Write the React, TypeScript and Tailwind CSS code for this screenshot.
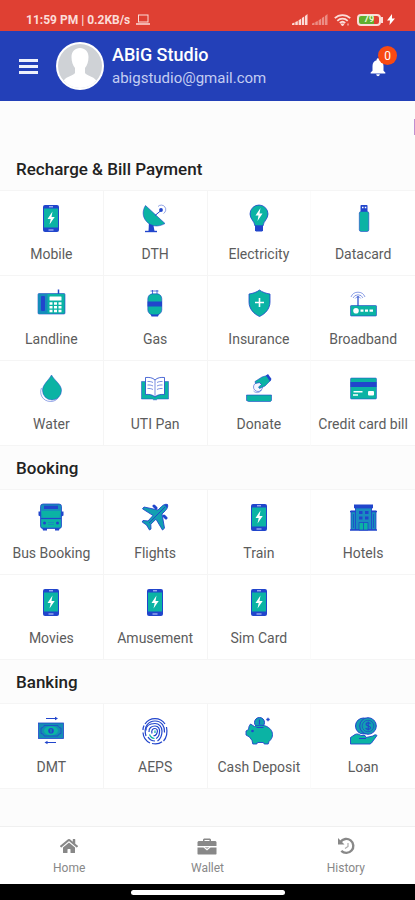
import React from "react";
import { FaHome } from "react-icons/fa";
import { MdNotifications } from "react-icons/md";

const TEAL = "#0bb3a4";
const BLUE = "#2145cc";

type IconProps = {
  children: React.ReactNode;
};
const Icon = ({ children }: IconProps) => (
  <svg viewBox="0 0 30 30" className="size-[30px]" fill="none" aria-hidden="true">
    {children}
  </svg>
);

const PhoneIcon = () => (
  <Icon>
    <rect x="7" y="2" width="16" height="27" rx="2" fill={BLUE} />
    <rect x="8" y="5.5" width="14" height="19" fill={TEAL} />
    <path d="M13 3.8h4M12.5 27h5" stroke="#c9d4ff" strokeWidth="1" />
    <path d="M16.5 8.5l-5 7.500h3.200l-1.200 5.500 5.200-7.500h-3.200z" fill="#fff" />
  </Icon>
);

const DishIcon = () => (
  <Icon>
    <path d="M9 19l-.5 9h6L13 20z" fill={BLUE} />
    <path d="M5 28.5h12" stroke={BLUE} strokeWidth="1.4" />
    <path
      d="M5.5 2.5C2 8 2.500 14 6.500 18.500 11 23.500 18 24.500 25 20.500z"
      fill={TEAL}
      stroke={BLUE}
      strokeWidth=".6"
    />
    <path d="M15 12.500l6-5" stroke={BLUE} strokeWidth="1" />
    <circle cx="21" cy="7" r="1.900" fill={BLUE} />
    <path d="M18 3.500a4.500 4.500 0 1 1 5.500 7" stroke={BLUE} strokeWidth=".7" opacity=".7" />
  </Icon>
);

const BulbIcon = () => (
  <Icon>
    <path
      d="M15 2a9 9 0 0 0-9 9c0 5 4.500 7 5 12h8c.5-5 5-7 5-12a9 9 0 0 0-9-9z"
      fill={TEAL}
      stroke={BLUE}
      strokeWidth=".8"
    />
    <path d="M11 22.500h8v5l-1 1h-6l-1-1z" fill={BLUE} />
    <path d="M16.500 5l-5 7.500h3l-1 5.500 5-7.500h-3z" fill="#fff" />
  </Icon>
);

const UsbIcon = () => (
  <Icon>
    <rect x="12.500" y="2" width="7" height="7" rx=".8" fill={BLUE} />
    <path d="M14 4.500h1.500M16.800 4.500h1.500" stroke="#fff" strokeWidth="1.400" />
    <rect x="11.300" y="8.500" width="9.500" height="20" rx="1.800" fill={TEAL} stroke={BLUE} strokeWidth=".6" />
  </Icon>
);

const LandlineIcon = () => (
  <Icon>
    <path d="M22.500 1.500v6" stroke={BLUE} strokeWidth="1.500" />
    <rect x="2" y="5.500" width="27" height="20.500" rx="1" fill={TEAL} stroke={BLUE} strokeWidth=".6" />
    <rect x="2.500" y="6" width="9" height="19.500" fill="#168bbd" />
    <rect x="5" y="8" width="4" height="15" rx="1" fill={BLUE} />
    <rect x="13.500" y="8.500" width="12" height="4" rx=".5" fill="#fff" />
    <path
      d="M13.500 15.500h3M18 15.500h3M22.500 15.500h3M13.500 19.200h3M18 19.200h3M22.500 19.200h3M13.500 22.900h3M18 22.900h3M22.500 22.900h3"
      stroke="#fff"
      strokeWidth="2.500"
    />
  </Icon>
);

const GasIcon = () => (
  <Icon>
    <path d="M10.500 3h8M12.500 2v4M17 2v4" stroke={BLUE} strokeWidth="1" opacity=".75" />
    <path d="M10.500 26h8.500l-1 2.500h-6.500z" fill={BLUE} />
    <rect x="7.800" y="5.800" width="14" height="21" rx="5" fill={TEAL} stroke={BLUE} strokeWidth=".6" />
    <rect x="7.600" y="13.500" width="14.400" height="5" fill={BLUE} />
  </Icon>
);

const ShieldIcon = () => (
  <Icon>
    <path
      d="M15.500 2c2.500 2 6.500 3.500 10.500 4v8c0 7-5 12-10.500 14.500C10 26 5 21 5 14V6c4-.5 8-2 10.500-4z"
      fill={TEAL}
      stroke={BLUE}
      strokeWidth=".8"
    />
    <path d="M15.500 10v9M11 14.500h9" stroke="#fff" strokeWidth="1.600" />
  </Icon>
);

const RouterIcon = () => (
  <Icon>
    <path d="M10 8v10" stroke={BLUE} strokeWidth="1.200" />
    <path
      d="M3 9a7.500 7.500 0 0 1 14 0M5 10a5.500 5.500 0 0 1 10 0M7.200 10.500a3.200 3.200 0 0 1 5.600 0"
      stroke={BLUE}
      strokeWidth=".8"
      opacity=".65"
    />
    <rect x="2.500" y="17.500" width="26" height="10.500" rx=".8" fill={TEAL} stroke={BLUE} strokeWidth=".6" />
    <circle cx="8" cy="22.700" r="2.800" fill="#fff" />
    <path d="M12.500 22.700h3M17 22.700h3M21.500 22.700h3.500" stroke="#fff" strokeWidth="2.200" />
  </Icon>
);

const DropIcon = () => (
  <Icon>
    <path
      d="M5.500 15c-2.500 6 1 13.300 9 13.500 3.500 0 6-1.500 7.500-3.500"
      stroke={BLUE}
      strokeWidth=".8"
      opacity=".6"
    />
    <path
      d="M15.500 2c3 5.500 10 9.500 10 15.500a9.500 9.500 0 0 1-19 0C6.500 11.500 12.500 7.500 15.500 2z"
      fill={TEAL}
      stroke={BLUE}
      strokeWidth=".5"
    />
  </Icon>
);

const BookIcon = () => (
  <Icon>
    <path d="M1.500 8.500h27V26h-11l-1 .8h-3l-1-.8h-11z" fill={TEAL} stroke={BLUE} strokeWidth=".5" />
    <path
      d="M15 7c-2.500-2.500-6-2.800-9.500-2.500v17c3.500-.3 7 0 9.500 2.500 2.500-2.500 6-2.800 9.500-2.500v-17C21 4.200 17.500 4.500 15 7z"
      fill="#fff"
      stroke={BLUE}
      strokeWidth=".8"
    />
    <path
      d="M15 7v17M7.500 8.500c2-.2 4 .2 5.500 1M7.500 12c2-.2 4 .2 5.500 1M7.500 15.500c2-.2 4 .2 5.500 1M22.500 8.500c-2-.2-4 .2-5.500 1M22.500 12c-2-.2-4 .2-5.500 1M22.500 15.500c-2-.2-4 .2-5.500 1"
      stroke={BLUE}
      strokeWidth=".8"
      opacity=".75"
    />
  </Icon>
);

const DonateIcon = () => (
  <Icon>
    <path d="M2.500 22h25v5.500l-1 1H4.500l-2-1z" fill={TEAL} stroke={BLUE} strokeWidth=".6" />
    <circle cx="14" cy="14" r="4.500" fill="#f3f5ff" stroke={BLUE} strokeWidth=".7" opacity=".8" />
    <path
      d="M11 8.500L18 4l5-1.500 3.500 5L21 13l-5.500 2.500-1-1.500 3-2.500-2-2-4 1z"
      fill={TEAL}
      stroke={BLUE}
      strokeWidth=".6"
    />
    <path d="M22 2.500l2-1.500 3.500 5-1.500 2.500z" fill={BLUE} />
    <path d="M9.500 18c2.500 2.500 6 2 8-1" stroke={BLUE} strokeWidth=".8" opacity=".6" />
  </Icon>
);

const CardIcon = () => (
  <Icon>
    <rect x="2.500" y="5" width="26" height="21" rx="1" fill={TEAL} stroke={BLUE} strokeWidth=".5" />
    <rect x="2.500" y="9" width="26" height="5" fill={BLUE} />
    <path d="M5.500 18.700h9M5 22h5" stroke="#fff" strokeWidth="1.500" />
    <rect x="20" y="18" width="6" height="4.500" rx="1" fill="#fff" />
  </Icon>
);

const BusIcon = () => (
  <Icon>
    <path d="M2.500 9.500h3v5.500l-3-1.500zM27.500 9.500h-3v5.500l3-1.500z" fill={BLUE} />
    <path d="M6 25h5v3.500H7zM19 25h5l-1 3.500h-4z" fill={BLUE} />
    <rect x="4.500" y="2" width="21" height="24.500" rx="2.500" fill="#168fbb" stroke={BLUE} strokeWidth=".8" />
    <rect x="8" y="3.700" width="14" height="3.300" fill={BLUE} />
    <path d="M5.500 9h19l-1 6.500h-17z" fill={TEAL} />
    <path d="M5.500 17.500h19V25h-19z" fill={TEAL} />
    <path d="M5 16.500h20" stroke={BLUE} strokeWidth="1" />
    <circle cx="8.500" cy="21" r="1.500" fill={BLUE} />
    <circle cx="21.500" cy="21" r="1.500" fill={BLUE} />
    <path d="M12 20.500h6M12 22.500h6" stroke="#168fbb" strokeWidth="1" />
  </Icon>
);

const PlaneIcon = () => (
  <Icon>
    <path d="M14 4l2 2M26 16l-2-2" stroke={BLUE} strokeWidth="3" strokeLinecap="round" />
    <path
      d="M27.500 2.500c-2-.8-4.500.5-6 2l-3.500 3.500L4 5 2.500 6.800l10.500 6.700-5 5.500-5-.5-.8 1.500 4.300 3 3 5 1.500-1-.2-4.800 5.200-5L22.500 28l2-1.800L22 12l3.500-3.500c1.500-1.500 2.800-4 2-6z"
      fill="#129fb2"
      stroke={BLUE}
      strokeWidth=".9"
    />
    <path d="M25 5L9 21" stroke={BLUE} strokeWidth="1" />
    <path d="M24 2.800l3.500-.3-.3 3.500z" fill={BLUE} />
  </Icon>
);

const HotelIcon = () => (
  <Icon>
    <path d="M6 2.500h19v3l-1.500 2h-16L6 5.500z" fill={BLUE} />
    <path d="M3 9h5v18.500H3zM23 9h5v18.500h-5z" fill="#168fbb" stroke={BLUE} strokeWidth=".8" />
    <rect x="7.500" y="6" width="16" height="21.500" fill="#1a8cc0" stroke={BLUE} strokeWidth=".8" />
    <path d="M2 9.500h6M23 9.500h6M2 28h27" stroke={BLUE} strokeWidth="1.500" />
    <path d="M11 10.500h3.500M17 10.500h3.500M11 16h3.500M17 16h3.500" stroke={BLUE} strokeWidth="3" />
    <path d="M11 20.500h9V28h-9z" fill={TEAL} stroke={BLUE} strokeWidth=".8" />
    <path d="M15.500 20.500V28M5.500 12v14M25.500 12v14" stroke={BLUE} strokeWidth=".8" />
  </Icon>
);

const TransferIcon = () => (
  <Icon>
    <path d="M10 2.500h10M20 26.500H10" stroke={BLUE} strokeWidth="1" />
    <path d="M19 .8l3 1.700-3 1.700zM11.500 24.800v3.400l-3-1.700z" fill={BLUE} />
    <rect x="2.500" y="7" width="25" height="15.500" fill="#148db4" stroke={BLUE} strokeWidth=".8" />
    <path
      d="M8 9.500h14c0 1.500 1.500 2.500 3 2.500v5.500c-1.500 0-3 1-3 2.500H8c0-1.500-1.500-2.500-3-2.500V12c1.500 0 3-1 3-2.500z"
      stroke={BLUE}
      strokeWidth=".8"
    />
    <ellipse cx="15" cy="14.700" rx="7" ry="4.500" fill={TEAL} />
    <circle cx="15" cy="14.700" r="2.800" fill={BLUE} />
    <path d="M15 13v3.500" stroke={TEAL} strokeWidth="1" />
  </Icon>
);

const FingerprintIcon = () => (
  <Icon>
    <g stroke={BLUE} strokeWidth="1.200">
      <path d="M5 8a12 12 0 0 1 20 0" />
      <path d="M3 14C3 12 3.500 10.500 4 9.500M26.500 11c1 5 .5 10-3 14M3 16.500c.3 5 3 8.500 7 10.500" />
      <path d="M6 20C3 10 9 5 15 5c7 0 10 6 9.500 11.500M12 27.500c4 1 7.500.3 10-1.800" />
      <path d="M6 14.500C6 9.500 10 7.500 15 7.500c4 0 7 3 7 7.500 0 5-1.500 8-4.500 10M8 21c1.500 2.500 4 4 7 4" />
      <path d="M9 16c-.5-4 2.500-6 6-6s5 3 4.500 6.500c-.3 3-1.500 5-3.500 6" />
      <path d="M9.500 18.500c1 2.500 2.500 3.800 5 4" stroke={TEAL} />
      <path d="M12 17.500c-1-3.500 1-5 3-5s3 2 2 4.500-2.500 3-3.500 2.500" />
      <path d="M15 14.500v2.500" stroke={TEAL} />
    </g>
  </Icon>
);

const PiggyIcon = () => (
  <Icon>
    <circle cx="15.500" cy="6.500" r="5" fill="#129fb2" stroke={BLUE} strokeWidth="1" />
    <path d="M15.500 3.500v5" stroke={BLUE} strokeWidth="1.200" />
    <path d="M24 1.800v3.400M22.300 3.500h3.400" stroke={BLUE} strokeWidth="1.300" />
    <path
      d="M5 10.500l1.500-2.500 4 2.500c3-1.500 10-2 14 1 3.500 2.500 4.800 6 3.500 10-.5 1.500-2 3-3 4l-.8 2.500h-4l-.7-1.500h-6l-.7 1.500h-4L8 24.500 5.500 21 2 19v-4l2.500-1.500z"
      fill={TEAL}
      stroke={BLUE}
      strokeWidth=".9"
    />
    <circle cx="8.500" cy="15" r="1.300" fill={BLUE} />
    <path d="M12.500 11.500h7" stroke={BLUE} strokeWidth="1" />
  </Icon>
);

const LoanIcon = () => (
  <Icon>
    <circle cx="15.500" cy="10" r="8" fill="#129fb2" stroke={BLUE} strokeWidth="1" />
    <circle cx="20" cy="10" r="8.300" fill="#129fb2" stroke={BLUE} strokeWidth="1" />
    <circle cx="20" cy="10" r="5.800" stroke={BLUE} strokeWidth=".7" />
    <path
      d="M22.500 7.800c-.8-1.500-4.500-1.500-4.500.5s4.500 1.500 4.500 3.500-4 2-4.800.3M20.200 5.500v9"
      stroke={BLUE}
      strokeWidth="1.100"
    />
    <path
      d="M2.500 21.500L7 18.500c2-1 4-.5 6 1h4l1 2 7-1.500c1.500-1.500 3-1.500 4-.5l-5.500 7.500-1.500 1H2.500z"
      fill={TEAL}
      stroke={BLUE}
      strokeWidth=".9"
    />
    <path d="M11 22.500h7" stroke={BLUE} strokeWidth="1" />
  </Icon>
);

type Service = {
  name: string;
  icon: React.FC;
};
type Section = {
  title: string;
  services: Service[];
};

const sections: Section[] = [
  {
    title: "Recharge & Bill Payment",
    services: [
      { name: "Mobile", icon: PhoneIcon },
      { name: "DTH", icon: DishIcon },
      { name: "Electricity", icon: BulbIcon },
      { name: "Datacard", icon: UsbIcon },
      { name: "Landline", icon: LandlineIcon },
      { name: "Gas", icon: GasIcon },
      { name: "Insurance", icon: ShieldIcon },
      { name: "Broadband", icon: RouterIcon },
      { name: "Water", icon: DropIcon },
      { name: "UTI Pan", icon: BookIcon },
      { name: "Donate", icon: DonateIcon },
      { name: "Credit card bill", icon: CardIcon },
    ],
  },
  {
    title: "Booking",
    services: [
      { name: "Bus Booking", icon: BusIcon },
      { name: "Flights", icon: PlaneIcon },
      { name: "Train", icon: PhoneIcon },
      { name: "Hotels", icon: HotelIcon },
      { name: "Movies", icon: PhoneIcon },
      { name: "Amusement", icon: PhoneIcon },
      { name: "Sim Card", icon: PhoneIcon },
    ],
  },
  {
    title: "Banking",
    services: [
      { name: "DMT", icon: TransferIcon },
      { name: "AEPS", icon: FingerprintIcon },
      { name: "Cash Deposit", icon: PiggyIcon },
      { name: "Loan", icon: LoanIcon },
    ],
  },
];

const SignalIcon = ({ className }: { className?: string }) => (
  <svg viewBox="0 0 16 11" className={`h-[11px] w-4 ${className}`} fill="currentColor" aria-hidden="true">
    <path d="M0 11V9.500L2.500 8.500V11zM3.300 11V8l2.500-1V11zM6.600 11V6.200l2.500-1.500V11zM9.900 11V4l2.300-1.400V11zM13 11V2l2.500-2V11z" />
  </svg>
);

const StatusBar = () => (
  <div className="flex h-[31px] items-center bg-[#df4033] pt-2 pr-5 pl-[26px] text-white">
    <span className="text-xs font-bold text-[#fbdcd8]">11:59 PM | 0.2KB/s</span>
    <svg viewBox="0 0 14 11" className="ml-1.5 h-[11px] w-3.5" fill="none" stroke="#fbdcd8" aria-hidden="true">
      <rect x="2.500" y="1" width="9.500" height="7" />
      <path d="M0 10h14" strokeWidth="1.500" />
    </svg>
    <SignalIcon className="ml-auto text-[#fbdcd8]" />
    <SignalIcon className="ml-1 text-[#ec8d84]" />
    <svg viewBox="0 0 17 12" className="ml-1.5 h-3 w-[17px]" fill="none" stroke="#fbdcd8" strokeWidth="1.800" aria-hidden="true">
      <path d="M.8 4.200a11 11 0 0 1 15.400 0M3.300 6.800a7.500 7.500 0 0 1 10.400 0M5.800 9a4 4 0 0 1 5.400 0" />
      <path d="M8.500 12l-1.500-2h3zM14 9.500v2" fill="#fbdcd8" strokeWidth="1" />
    </svg>
    <div className="ml-1.5 flex h-3 w-6 items-center rounded-sm border-2 border-[#fbdcd8] bg-gradient-to-r from-[#5fae2e] from-75% to-[#df4033] to-75%">
      <span className="w-full text-center text-[9px] leading-none font-bold text-[#e4f7d8]">79</span>
    </div>
    <span className="h-1.5 w-0.5 bg-[#fbdcd8]" />
    <svg viewBox="0 0 8 11" className="ml-1 h-[11px] w-2" fill="#fff" aria-hidden="true">
      <path d="M5 0L0 6.500h3L2.500 11 8 4.500H5z" />
    </svg>
  </div>
);

const Header = () => (
  <header className="flex h-[70px] items-center bg-[#2340b8] pr-[18px] pl-[19px] text-white">
    <button type="button" aria-label="Menu" className="flex w-[19px] flex-col gap-[3px]">
      <span className="h-[3px] w-full bg-[#eef1fc]" />
      <span className="h-[3px] w-full bg-[#eef1fc]" />
      <span className="h-[3px] w-full bg-[#eef1fc]" />
    </button>
    <svg viewBox="0 0 48 48" className="ml-[18px] size-12" aria-hidden="true">
      <circle cx="24" cy="24" r="24" fill="#fff" />
      <circle cx="24" cy="24" r="22" fill="#cfd2d6" />
      <path
        d="M24 6c-5 0-8.500 3.500-8.500 9 0 5 1.500 8.500 3.500 11v5c-2 3-8 3-11.300 7.500A21.500 21.500 0 0 0 24 46a21.500 21.500 0 0 0 16.300-7.500C37 34 31 34 29 31v-5c2-2.500 3.500-6 3.500-11 0-5.500-3.500-9-8.500-9z"
        fill="#fff"
      />
    </svg>
    <div className="ml-2 flex flex-col">
      <h1 className="text-lg leading-6 font-medium">ABiG Studio</h1>
      <p className="text-[15px] leading-[22px] text-[#c3cdf2]">abigstudio@gmail.com</p>
    </div>
    <button type="button" aria-label="Notifications" className="relative ml-auto flex h-10 w-[30px] items-end pb-2">
      <MdNotifications className="size-[22px]" />
      <span className="absolute top-0 right-0 flex size-[19px] items-center justify-center rounded-full bg-[#f84a12] text-xs">
        0
      </span>
    </button>
  </header>
);

const ServiceTile = ({ name, icon: ServiceIcon }: Service) => (
  <button
    type="button"
    className="flex flex-col items-center border-r border-b border-[#f5f5f5] bg-white py-3 nth-[4n]:border-r-0 nth-[4n+3]:border-r-[#fbfbfb]"
  >
    <ServiceIcon />
    <span className="mt-3 text-sm leading-[18px] whitespace-nowrap text-[#5c5c5c]">{name}</span>
  </button>
);

const ServiceSection = ({ title, services }: Section) => (
  <section>
    <h2 className="flex h-11 items-center border-b border-[#f5f5f5] px-4 pt-0.5 text-[17px] font-medium text-[#222]">
      {title}
    </h2>
    <div className="grid grid-cols-4 bg-white">
      {services.map((service) => (
        <ServiceTile key={service.name} {...service} />
      ))}
      {services.length % 4 !== 0 && <div className="border-b border-[#f5f5f5]" />}
    </div>
  </section>
);

const WalletIcon = () => (
  <svg viewBox="0 0 20 17" className="h-[17px] w-5" fill="currentColor" aria-hidden="true">
    <path d="M6 3V1.500L7 .5h6l1 1V3h4.500l1 1v4H.5V4l1-1zM7.500 3h5V2h-5z" fillRule="evenodd" />
    <path d="M.5 9.500h6l3.500 3 3.500-3h6V16l-.5.5H1L.5 16z" />
    <path d="M7.500 9h5L10 11.200z" opacity=".6" />
  </svg>
);

const HistoryIcon = () => (
  <svg viewBox="0 0 18 18" className="size-[18px]" fill="none" stroke="currentColor" aria-hidden="true">
    <path d="M3.500 5a7 7 0 1 1 .8 8.800" strokeWidth="2.400" />
    <path d="M1 1v6.500h6.500z" fill="currentColor" stroke="none" />
    <path d="M11 6v3.500L8 11.500" strokeWidth="1.200" opacity=".7" />
  </svg>
);

const tabs = [
  { name: "Home", icon: <FaHome className="size-[18px]" /> },
  { name: "Wallet", icon: <WalletIcon /> },
  { name: "History", icon: <HistoryIcon /> },
];

const BottomNav = () => (
  <nav className="grid h-[58px] grid-cols-3 border-t border-[#f0f0f0] bg-white text-[#888]">
    {tabs.map(({ name, icon }) => (
      <a key={name} href="#" className="flex flex-col items-center pt-2.5">
        <span className="flex h-[18px] items-center">{icon}</span>
        <span className="mt-1 text-xs leading-[18px]">{name}</span>
      </a>
    ))}
  </nav>
);

const App = () => {
  return (
    <div className="flex min-h-screen flex-col bg-[#fcfcfc] font-[Roboto,sans-serif]">
      <StatusBar />
      <Header />
      <main className="flex-1">
        {/* news ticker, its first letter just coming in */}
        <div className="flex h-[46px] items-center justify-end overflow-hidden pt-1.5">
          <span className="h-4 w-px bg-[#c08fd0]" />
        </div>
        {sections.map((section) => (
          <ServiceSection key={section.title} {...section} />
        ))}
      </main>
      <BottomNav />
      <div className="flex h-4 items-center justify-center bg-black">
        <span className="h-[5px] w-[154px] rounded-full bg-white" />
      </div>
    </div>
  );
};

export default App;
